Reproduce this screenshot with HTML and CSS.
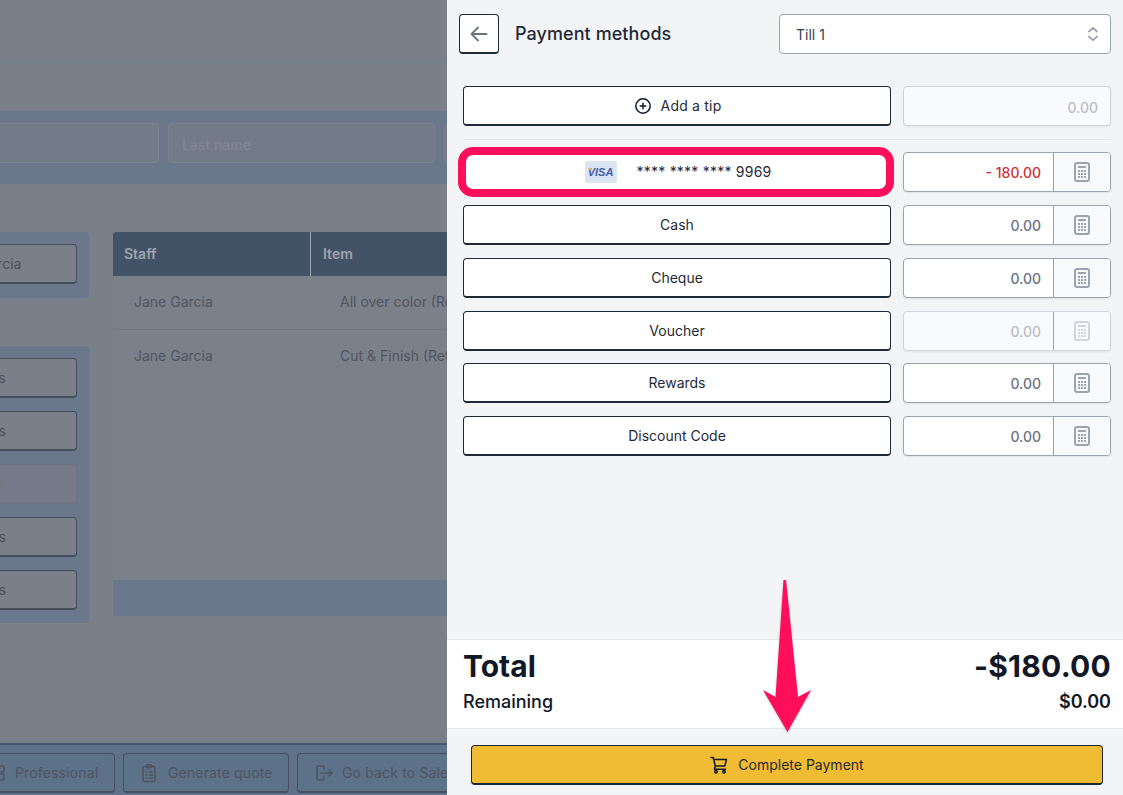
FILE: index.html
```html
<!DOCTYPE html>
<html lang="en">
<head>
<meta charset="utf-8">
<title>Payment methods</title>
<link rel="stylesheet" href="styles.css">
</head>
<body>
<div class="app">
  <div class="backdrop">
    <div class="topline"></div>
    <div class="searchband">
      <div class="field"></div>
      <div class="field">Last name</div>
      <div class="field"></div>
    </div>
    <div class="workarea">
      <div class="sidecol">
        <div class="sidepanel">
          <div class="sidebtn">Jane Garcia</div>
        </div>
        <div class="sidepanel second">
          <div class="sidebtn">Passes</div>
          <div class="sidebtn">Tokens</div>
          <div class="sidebtn off">Menus</div>
          <div class="sidebtn">Tickets</div>
          <div class="sidebtn">Rentals</div>
        </div>
      </div>
      <div class="tablewrap">
        <div class="thead">
          <div class="th staff">Staff</div>
          <div class="th item">Item</div>
        </div>
        <div class="tr">
          <div class="td staff">Jane Garcia</div>
          <div class="td">All over color (Retail)</div>
        </div>
        <div class="tr plain">
          <div class="td staff">Jane Garcia</div>
          <div class="td">Cut &amp; Finish (Retail)</div>
        </div>
        <div class="tfoot"></div>
      </div>
    </div>
    <div class="bottombar">
      <div class="barbtn first">
        <svg class="baricon" viewBox="0 0 20 20" fill="none" stroke="currentColor" stroke-width="1.6"><rect x="3" y="3" width="6" height="6" rx="1"/><rect x="11" y="3" width="6" height="6" rx="1"/><rect x="3" y="11" width="6" height="6" rx="1"/><rect x="11" y="11" width="6" height="6" rx="1"/></svg>
        Professional
      </div>
      <div class="barbtn quote">
        <svg class="baricon" viewBox="0 0 20 20" fill="none" stroke="currentColor" stroke-width="1.6" stroke-linecap="round"><rect x="4" y="3.500" width="12" height="15" rx="2"/><rect x="7.500" y="1.800" width="5" height="3" rx="1"/><path d="M7 9h.5M10 9h3.500M7 12h.5M10 12h3.500M7 15h.5M10 15h3.500"/></svg>
        Generate quote
      </div>
      <div class="barbtn back">
        <svg class="baricon" viewBox="0 0 20 20" fill="none" stroke="currentColor" stroke-width="1.6" stroke-linecap="round" stroke-linejoin="round"><path d="M10 6V4.500A1.500 1.500 0 0 0 8.500 3H4.500A1.500 1.500 0 0 0 3 4.500v11A1.500 1.500 0 0 0 4.500 17h4a1.500 1.500 0 0 0 1.500-1.500V14M7 10h11M15 7l3 3-3 3"/></svg>
        Go back to Sales
      </div>
    </div>
  </div>

  <div class="panel">
    <div class="head">
      <button class="backbtn" type="button" aria-label="Back">
        <svg width="18" height="18" viewBox="0 0 18 18" fill="none" stroke="#6b7280" stroke-width="1.800" stroke-linecap="round" stroke-linejoin="round"><path d="M16.500 9H1.800M8 2.500 1.500 9 8 15.500"/></svg>
      </button>
      <div class="title">Payment methods</div>
      <div class="select">
        <span>Till 1</span>
        <svg width="12" height="16" viewBox="0 0 12 16" fill="none" stroke="#9ca3af" stroke-width="1.800" stroke-linecap="round" stroke-linejoin="round"><path d="M2 5.500 6 1.800l4 3.700M2 10.500l4 3.700 4-3.700"/></svg>
      </div>
    </div>

    <div class="methods">
      <div class="tiprow">
        <button class="paybtn" type="button">
          <svg class="plus" width="16" height="16" viewBox="0 0 16 16" fill="none" stroke="#111827" stroke-width="1.500" stroke-linecap="round"><circle cx="8" cy="8" r="7.200"/><path d="M8 5.200v5.600M5.200 8h5.600"/></svg>
          <span class="wide">Add a tip</span>
        </button>
        <div class="amount disabled solo"><div class="val">0.00</div></div>
      </div>
      <div class="divider"></div>
      <div class="rows">
        <button class="paybtn card" type="button">
          <span class="visa"><span class="visa-flag"></span>VISA</span>
          <span class="cardno">**** **** **** 9969</span>
        </button>
        <div class="amount"><div class="val neg">- 180.00</div><div class="calc"><svg class="calcicon" viewBox="0 0 16 20"><use href="#calc"/></svg></div></div>

        <button class="paybtn" type="button">Cash</button>
        <div class="amount"><div class="val">0.00</div><div class="calc"><svg class="calcicon" viewBox="0 0 16 20"><use href="#calc"/></svg></div></div>

        <button class="paybtn" type="button">Cheque</button>
        <div class="amount"><div class="val">0.00</div><div class="calc"><svg class="calcicon" viewBox="0 0 16 20"><use href="#calc"/></svg></div></div>

        <button class="paybtn" type="button">Voucher</button>
        <div class="amount disabled"><div class="val">0.00</div><div class="calc"><svg class="calcicon" viewBox="0 0 16 20"><use href="#calc"/></svg></div></div>

        <button class="paybtn" type="button">Rewards</button>
        <div class="amount"><div class="val">0.00</div><div class="calc"><svg class="calcicon" viewBox="0 0 16 20"><use href="#calc"/></svg></div></div>

        <button class="paybtn" type="button">Discount Code</button>
        <div class="amount"><div class="val">0.00</div><div class="calc"><svg class="calcicon" viewBox="0 0 16 20"><use href="#calc"/></svg></div></div>
      </div>
    </div>

    <div class="totals">
      <div class="totalrow"><span>Total</span><span class="totalval">-$180.00</span></div>
      <div class="remainrow"><span class="remlabel">Remaining</span><span class="remval">$0.00</span></div>
    </div>
    <div class="actions">
      <button class="complete" type="button">
        <svg width="18" height="18" viewBox="0 0 18 18" fill="none" stroke="#111827" stroke-width="1.500" stroke-linecap="round" stroke-linejoin="round"><path d="M1 1.500h2.300l.4 2M3.700 3.500h12.800l-1.700 6.500H5.200L3.700 3.500ZM5.200 10 4.500 13.200h11"/><circle cx="6" cy="15.700" r="1.300"/><circle cx="14" cy="15.700" r="1.300"/></svg>
        Complete Payment
      </button>
    </div>
  </div>

  <div class="highlight"></div>
  <svg class="arrow" width="60" height="160" viewBox="0 0 60 160">
    <polygon points="25.500,2 28,2 40,119 53,112 29.500,154 5,112 17.500,119" fill="#ff0f5b"/>
  </svg>

  <svg class="defs" width="0" height="0" aria-hidden="true">
    <symbol id="calc" viewBox="0 0 16 20">
      <rect x="1" y="1" width="14" height="18" rx="2" fill="none" stroke="currentColor" stroke-width="2"/>
      <rect x="4" y="4" width="8" height="2" fill="currentColor"/>
      <path d="M4 8h2v2H4zM7 8h2v2H7zM10 8h2v2h-2zM4 11h2v2H4zM7 11h2v2H7zM10 11h2v2h-2zM4 14h2v2H4zM7 14h2v2H7zM10 14h2v2h-2z" fill="currentColor"/>
    </symbol>
  </svg>
</div>
</body>
</html>
```
FILE: styles.css
```css
* { box-sizing: border-box; }
html, body { margin: 0; padding: 0; height: 100%; overflow: hidden; }
body { font-family: Inter, "Liberation Sans", sans-serif; font-size: 14px; color: #111827; }
button { font-family: inherit; cursor: pointer; }

.app { position: relative; display: flex; width: 1123px; height: 795px; overflow: hidden; }

/* dimmed page behind the slide-over */
.backdrop { width: 447px; flex: none; height: 795px; background: #7a808a; overflow: hidden; display: flex; flex-direction: column; }
.topline { height: 63px; flex: none; border-bottom: 1px solid #6f7f95; }
.searchband { flex: none; margin-top: 48px; height: 73px; background: #6b788c; display: flex; align-items: flex-start; gap: 9px; margin-left: -108px; padding-top: 12px; width: 900px; }
.field { flex: none; width: 267px; height: 40px; border: 1px solid #7a8291; border-radius: 4px; background: #737a88; color: #7f8694; line-height: 41px; padding-left: 13px; font-weight: 500; }

.workarea { flex: none; margin-top: 48px; height: 391px; display: flex; gap: 24px; margin-left: -125px; width: 900px; }
.sidecol { flex: none; width: 214px; display: flex; flex-direction: column; gap: 48px; }
.sidepanel { background: #6b788c; border-radius: 4px; padding: 12px 12px 14px; display: flex; flex-direction: column; gap: 13px; }
.sidepanel.second { padding-bottom: 13px; }
.sidebtn { height: 40px; line-height: 38px; text-align: center; color: #4b515c; border: 1px solid #454c5a; border-bottom-width: 2px; border-radius: 4px; background: #7a808a; }
.sidebtn.off { color: #71767f; border-color: #6f7585; background: #747a89; }

.tablewrap { flex: none; width: 660px; height: 384px; display: flex; flex-direction: column; background: #7b818b; }
.thead { flex: none; height: 44px; display: flex; background: #435367; border-radius: 3px 0 0 0; }
.th { line-height: 44px; padding-left: 11px; font-weight: 600; color: #a0a4ac; }
.th.item { padding-left: 12px; }
.th.staff { width: 198px; border-right: 1px solid #a0a4ac; }
.tr { flex: none; height: 54px; display: flex; border-bottom: 1px solid #72787f; }
.tr.plain { border-bottom: 0; height: 250px; }
.td { padding: 17px 0 0 0; color: #50555f; line-height: 17px; }
.td.staff { width: 227px; padding-left: 21px; }
.tfoot { flex: none; height: 36px; background: #6b788c; }

.bottombar { flex: none; margin-top: 120px; height: 52px; background: #5d7188; border-top: 2px solid #455a72; display: flex; align-items: flex-start; padding-top: 8px; margin-left: -65px; gap: 8px; width: 800px; }
.barbtn { flex: none; height: 40px; display: flex; align-items: center; gap: 10px; border: 1px solid #454f5f; border-bottom-width: 2px; border-radius: 4px; color: #4e5560; letter-spacing: .15px; }
.barbtn.first { width: 180px; padding-left: 51px; gap: 8px; }
.barbtn.quote { width: 166px; padding-left: 15px; gap: 9px; }
.barbtn.back { width: 180px; padding-left: 16px; gap: 8px; }
.baricon { width: 20px; height: 20px; flex: none; }

/* slide-over */
.panel { width: 676px; flex: none; height: 795px; background: #f3f4f6; display: flex; flex-direction: column; }
.head { flex: none; height: 40px; margin-top: 14px; padding: 0 12px; display: flex; align-items: center; }
.backbtn { width: 40px; height: 40px; flex: none; background: #fff; border: 1px solid #1f2937; border-bottom-width: 2px; border-radius: 4px; display: flex; align-items: center; justify-content: center; padding: 0; }
.title { margin: 0 0 2px 16px; font-size: 18px; font-weight: 500; color: #1f2937; letter-spacing: .07px; }
.select { margin-left: auto; width: 332px; height: 40px; background: #fff; border: 1px solid #9ca3af; border-radius: 4px; display: flex; align-items: center; justify-content: space-between; padding: 0 11px 0 16px; color: #374151; }

.methods { flex: 1; padding: 32px 12px 0 16px; min-height: 0; }
.tiprow, .rows { display: grid; grid-template-columns: 428px 208px; column-gap: 12px; }
.rows { row-gap: 12.85px; }
.divider { height: 1px; background: #e5e7eb; margin: 13px 0 12px; }

.paybtn { height: 40px; background: #fff; border: 1px solid #1f2937; border-bottom-width: 2px; border-radius: 4px; font-size: 14px; color: #1f2937; display: flex; align-items: center; justify-content: center; padding: 0; }
.plus { margin: 0 10px 0 2px; }
.wide { letter-spacing: .2px; }
.visa { width: 32px; height: 22px; margin-left: 2px; background: #dbe4f3; border-radius: 2px; position: relative; font: italic 700 11px/22px "Liberation Sans", sans-serif; color: #3f5ea8; text-align: center; }
.visa-flag { position: absolute; left: 4px; top: 7px; width: 3px; height: 2px; background: #e8b53a; }
.cardno { margin-left: 20px; color: #1f2937; letter-spacing: .22px; }

.amount { height: 40px; display: flex; border: 1px solid #9ca3af; border-radius: 4px; background: #fff; overflow: hidden; box-shadow: 0 1px 2px rgba(0,0,0,.08); }
.val { flex: 1; text-align: right; padding-right: 12px; line-height: 40px; font-weight: 500; color: #6b7280; font-size: 14px; }
.val.neg { color: #cf3232; }
.calc { width: 57px; flex: none; background: #f9fafb; border-left: 1px solid #9ca3af; display: flex; align-items: center; justify-content: center; color: #9ca3af; }
.calcicon { width: 16px; height: 20px; }
.amount.disabled { background: #f9fafb; border-color: #d1d5db; }
.amount.disabled .val { color: #b9bdc5; }
.amount.disabled .calc { border-left-color: #9ca3af; color: #d1d5db; }
.amount.solo .val { line-height: 41px; }

.totals { flex: none; height: 90px; background: #fff; border-top: 1px solid #e5e7eb; border-bottom: 1px solid #e5e7eb; padding: 8px 12px 0 16px; }
.totalrow { display: flex; justify-content: space-between; font-size: 30px; line-height: 36px; font-weight: 700; color: #111827; }
.totalval { letter-spacing: .25px; }
.remainrow { display: flex; justify-content: space-between; align-items: center; margin-top: 4px; line-height: 28px; }
.remlabel { font-size: 18px; font-weight: 500; color: #111827; }
.remval { font-size: 18px; font-weight: 600; color: #111827; }

.actions { flex: none; height: 66px; padding: 16px 20px 0 24px; }
.complete { width: 632px; height: 40px; background: #f0bc33; border: 1px solid #1f2937; border-bottom-width: 2px; border-radius: 4px; display: flex; align-items: center; justify-content: center; gap: 10px; font-size: 14px; color: #1f2937; padding: 0; }

/* annotation overlay */
.highlight { position: absolute; left: 458px; top: 147px; width: 436px; height: 50px; border: 8px solid #ff0f5b; border-radius: 15px; }
.arrow { position: absolute; left: 758px; top: 578px; filter: drop-shadow(0 1px 1px rgba(0,0,0,.25)); }
.defs { position: absolute; }
```
